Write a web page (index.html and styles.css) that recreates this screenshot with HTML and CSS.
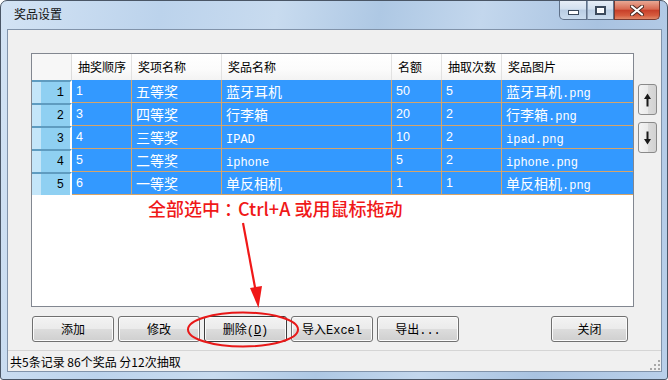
FILE: index.html
```html
<!DOCTYPE html>
<html lang="zh-CN">
<head>
<meta charset="utf-8">
<title>奖品设置</title>
<link rel="stylesheet" href="styles.css">
</head>
<body>
<div class="window">
  <div class="titlebar">
    <span class="title">奖品设置</span>
    <div class="caption-btns">
      <div class="cbtn min"><span class="min-glyph"></span></div>
      <div class="cbtn max"><span class="max-glyph"></span></div>
      <div class="cbtn close">
        <svg width="14" height="11" viewBox="0 0 14 11">
          <path d="M2 1.5 L12 9.5 M12 1.5 L2 9.5" stroke="#4a2a22" stroke-width="4" stroke-linecap="round"/>
          <path d="M2 1.5 L12 9.5 M12 1.5 L2 9.5" stroke="#ffffff" stroke-width="2.2" stroke-linecap="round"/>
        </svg>
      </div>
    </div>
  </div>
  <div class="client">
    <div class="main">
      <div class="grid">
        <div class="ghead">
          <div class="hc corner"></div>
          <div class="hc w-1">抽奖顺序</div>
          <div class="hc w-2">奖项名称</div>
          <div class="hc w-3">奖品名称</div>
          <div class="hc w-4">名额</div>
          <div class="hc w-5">抽取次数</div>
          <div class="hc w-6">奖品图片</div>
        </div>
        <div class="grow">
          <div class="rh">1</div>
          <div class="c w-1 n">1</div><div class="c w-2">五等奖</div><div class="c w-3">蓝牙耳机</div><div class="c w-4 n">50</div><div class="c w-5 n">5</div><div class="c w-6">蓝牙耳机<span class="m">.png</span></div>
        </div>
        <div class="grow">
          <div class="rh">2</div>
          <div class="c w-1 n">3</div><div class="c w-2">四等奖</div><div class="c w-3">行李箱</div><div class="c w-4 n">20</div><div class="c w-5 n">2</div><div class="c w-6">行李箱<span class="m">.png</span></div>
        </div>
        <div class="grow">
          <div class="rh">3</div>
          <div class="c w-1 n">4</div><div class="c w-2">三等奖</div><div class="c w-3"><span class="m">IPAD</span></div><div class="c w-4 n">10</div><div class="c w-5 n">2</div><div class="c w-6"><span class="m">ipad.png</span></div>
        </div>
        <div class="grow">
          <div class="rh">4</div>
          <div class="c w-1 n">5</div><div class="c w-2">二等奖</div><div class="c w-3"><span class="m">iphone</span></div><div class="c w-4 n">5</div><div class="c w-5 n">2</div><div class="c w-6"><span class="m">iphone.png</span></div>
        </div>
        <div class="grow">
          <div class="rh">5</div>
          <div class="c w-1 n">6</div><div class="c w-2">一等奖</div><div class="c w-3">单反相机</div><div class="c w-4 n">1</div><div class="c w-5 n">1</div><div class="c w-6">单反相机<span class="m">.png</span></div>
        </div>
      </div>
      <div class="side">
        <div class="sbtn">
          <svg width="9" height="14" viewBox="0 0 9 14"><path d="M4.5 0.5 L8 6 L5.5 6 L5.5 13.5 L3.5 13.5 L3.5 6 L1 6 Z" fill="#1a1a1a"/></svg>
        </div>
        <div class="sbtn">
          <svg width="9" height="14" viewBox="0 0 9 14"><path d="M4.5 13.5 L8 8 L5.5 8 L5.5 0.5 L3.5 0.5 L3.5 8 L1 8 Z" fill="#1a1a1a"/></svg>
        </div>
      </div>
    </div>
    <div class="buttons">
      <div class="btn"><span>添加</span></div>
      <div class="btn"><span>修改</span></div>
      <div class="btn default"><span>删除<span class="m">(<u>D</u>)</span></span></div>
      <div class="btn"><span>导入<span class="m">Excel</span></span></div>
      <div class="btn"><span>导出<span class="m">...</span></span></div>
      <div class="btn close-btn"><span>关闭</span></div>
    </div>
    <div class="status">
      <span>共5条记录 86个奖品 分12次抽取</span>
      <svg class="grip" width="10" height="10" viewBox="0 0 10 10">
        <g fill="#a8a8a8">
          <rect x="8" y="0" width="2" height="2"/>
          <rect x="4" y="4" width="2" height="2"/><rect x="8" y="4" width="2" height="2"/>
          <rect x="0" y="8" width="2" height="2"/><rect x="4" y="8" width="2" height="2"/><rect x="8" y="8" width="2" height="2"/>
        </g>
      </svg>
    </div>
  </div>
  <div class="note">全部选中<span class="colon">：</span>Ctrl+A 或用鼠标拖动</div>
  <svg class="marks" width="668" height="380" viewBox="0 0 668 380">
    <path d="M243 223 L255.5 290" stroke="#f01818" stroke-width="2.2" fill="none"/>
    <path d="M258.5 308 L250 288 L262 286 Z" fill="#f01818"/>
    <ellipse cx="243" cy="329.5" rx="55" ry="17" stroke="#e81818" stroke-width="2" fill="none"/>
  </svg>
</div>
</body>
</html>
```

FILE: styles.css
```css
html, body {
  margin: 0;
  padding: 0;
}

body {
  width: 668px;
  height: 380px;
  overflow: hidden;
  background: #ffffff;
  font-family: "Noto Sans CJK SC", "Liberation Sans", sans-serif;
  font-size: 12px;
  color: #000;
}

.window {
  position: relative;
  box-sizing: border-box;
  width: 668px;
  height: 380px;
  border: 1px solid #4a5666;
  border-radius: 7px 7px 3px 3px;
  background: linear-gradient(100deg, #d3e3f4 0%, #bcd3ec 22%, #c8dbef 38%, #aec8e4 52%, #c3d7ed 66%, #a9c3e1 82%, #bad0ea 100%);
  display: flex;
  flex-direction: column;
  padding: 0 5px 7px 6px;
}

/* Title bar */
.titlebar {
  height: 28px;
  display: flex;
  align-items: flex-start;
  flex: none;
}

.title {
  margin-left: 7px;
  margin-top: 6px;
  font-size: 12px;
  line-height: 14px;
  color: #111;
}

.caption-btns {
  margin-left: auto;
  margin-right: 2px;
  display: flex;
  height: 19px;
}

.cbtn {
  box-sizing: border-box;
  height: 19px;
  border: 1px solid #5f7189;
  border-top: none;
  display: flex;
  align-items: center;
  justify-content: center;
}

.cbtn.min {
  width: 28px;
  border-bottom-left-radius: 5px;
  background: linear-gradient(#e6eef7 0%, #d2e0ef 45%, #b9cde3 50%, #cadcee 100%);
}

.cbtn.max {
  width: 27px;
  border-left: 1px solid #8a9cb2;
  background: linear-gradient(#e6eef7 0%, #d2e0ef 45%, #b9cde3 50%, #cadcee 100%);
}

.cbtn.close {
  width: 46px;
  border-left: 1px solid #7a4a40;
  border-bottom-right-radius: 5px;
  border-color: #7a3a30;
  background: linear-gradient(#e9a894 0%, #d86a52 45%, #c8402a 52%, #d65b3e 80%, #e08a6a 100%);
}

.min-glyph {
  display: block;
  width: 9px;
  height: 3px;
  margin-top: 5px;
  background: #ffffff;
  border: 1px solid #3b4a5c;
}

.max-glyph {
  display: block;
  box-sizing: border-box;
  width: 11px;
  height: 9px;
  border: 1px solid #3b4a5c;
  background: #f4f8fc;
  box-shadow: inset 0 0 0 1px #3b4a5c, inset 0 0 0 2px #ffffff;
}

/* Client area */
.client {
  position: relative;
  box-sizing: border-box;
  height: 343px;
  border: 1px solid #8193aa;
  background: #f0f0f0;
  display: flex;
  flex-direction: column;
  padding: 23px 0 0 23px;
}

.main {
  display: flex;
  gap: 4px;
  height: 254px;
}

.grid {
  box-sizing: border-box;
  width: 603px;
  height: 254px;
  border: 1px solid #828790;
  background: #ffffff;
  overflow: hidden;
}

.w-1 { width: 60px; }
.w-2 { width: 90px; }
.w-3 { width: 170px; }
.w-4 { width: 50px; }
.w-5 { width: 60px; }
.w-6 { width: 131px; }

.ghead {
  display: flex;
  height: 26px;
  background: linear-gradient(#ffffff 0%, #fbfbfb 60%, #f3f3f3 100%);
}

.hc {
  box-sizing: border-box;
  height: 26px;
  padding-left: 6px;
  font-size: 12px;
  line-height: 26px;
  border-right: 1px solid #e2e2e2;
  white-space: nowrap;
  flex: none;
}

.hc:last-child {
  border-right: none;
}

.hc.corner {
  width: 40px;
  background: #f7f7f7;
  border-right: 1px solid #dcdcdc;
}

.grow {
  display: flex;
  height: 23px;
}

.c {
  box-sizing: border-box;
  flex: none;
  height: 23px;
  padding-left: 4px;
  background: #3399ff;
  color: #ffffff;
  font-size: 14px;
  line-height: 23px;
  border-right: 1px solid #d6a468;
  border-bottom: 1px solid #d6a468;
  white-space: nowrap;
  overflow: hidden;
}

.c.w-6 {
  border-right: none;
}

.c.n {
  font-family: "Liberation Sans", sans-serif;
  font-size: 12.5px;
}

.rh {
  box-sizing: border-box;
  flex: none;
  width: 40px;
  height: 23px;
  padding-right: 6px;
  display: flex;
  align-items: center;
  justify-content: flex-end;
  color: #000;
  font-family: "Liberation Mono", monospace;
  font-size: 12px;
  background: linear-gradient(to right, #c4e6f9 0, #c4e6f9 9px, #8fd0f2 9px, #8fd0f2 100%);
  border-top: 2px solid #5f9cc0;
  border-right: 2px solid #ffffff;
}

.m {
  font-family: "Liberation Mono", monospace;
  font-size: 12px;
  line-height: 14px;
}

/* side buttons */
.side {
  display: flex;
  flex-direction: column;
  gap: 7px;
  padding-top: 31px;
}

.sbtn {
  box-sizing: border-box;
  width: 19px;
  height: 31px;
  border: 1px solid #8a8a8a;
  border-radius: 3px;
  background: linear-gradient(to right, #f4f4f4 0%, #ebebeb 50%, #dcdcdc 50%, #d2d2d2 100%);
  display: flex;
  align-items: center;
  justify-content: center;
}

/* bottom buttons */
.buttons {
  display: flex;
  gap: 4px;
  margin-top: 9px;
  padding-left: 1px;
  height: 26px;
}

.btn {
  box-sizing: border-box;
  width: 82px;
  height: 26px;
  border: 1px solid #707070;
  border-radius: 3px;
  background: linear-gradient(#f3f3f3 0%, #ebebeb 48%, #dcdcdc 52%, #cfcfcf 100%);
  box-shadow: inset 0 0 0 1px #fbfbfb;
  display: flex;
  align-items: center;
  justify-content: center;
  font-size: 12px;
  line-height: 16px;
  color: #000;
}

.btn .m {
  font-size: 12px;
}

.btn.default {
  width: 83px;
  border-color: #3c3c3c;
}

.btn.close-btn {
  width: 77px;
  margin-left: 88px;
}

/* status bar */
.status {
  margin-top: auto;
  margin-left: -23px;
  box-sizing: border-box;
  height: 21px;
  border-top: 1px solid #d5d5d5;
  display: flex;
  align-items: center;
  justify-content: space-between;
  padding: 0 1px 0 2px;
  font-size: 12px;
}

.grip {
  align-self: flex-end;
  margin-bottom: 1px;
}

/* annotations */
.note {
  position: absolute;
  left: 147px;
  top: 197px;
  font-size: 18px;
  line-height: 20px;
  font-weight: 500;
  color: #f01818;
  white-space: nowrap;
}

.note .colon {
  display: inline-block;
  font-feature-settings: "halt" 1;
  padding: 0 5px 0 4px;
}

.marks {
  position: absolute;
  left: -1px;
  top: -1px;
  pointer-events: none;
}
```
